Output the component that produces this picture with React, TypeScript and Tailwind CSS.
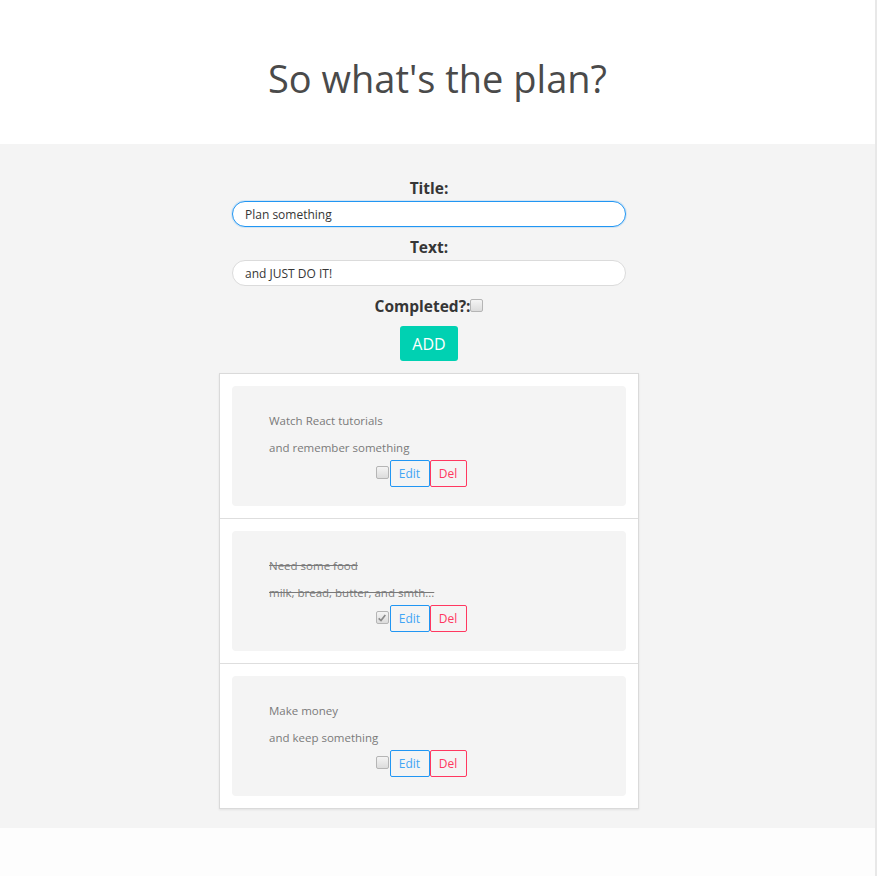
import { useState } from "react"

type Plan = { title: string; text: string; done: boolean }

const plans: Plan[] = [
  { title: "Watch React tutorials", text: "and remember something", done: false },
  { title: "Need some food", text: "milk, bread, butter, and smth...", done: true },
  { title: "Make money", text: "and keep something", done: false },
]

function Check({ checked }: { checked: boolean }) {
  return (
    <span className="inline-flex h-[13px] w-[13px] items-center justify-center rounded-[2px] border border-[#b5b5b5] bg-gradient-to-b from-[#f4f4f4] to-[#dcdcdc]">
      {checked && (
        <svg viewBox="0 0 12 12" className="h-[10px] w-[10px]">
          <path d="M2 6.5 L4.8 9 L10 2.5" fill="none" stroke="#8a8a8a" strokeWidth="2" />
        </svg>
      )}
    </span>
  )
}

function PlanItem({ plan }: { plan: Plan }) {
  const strike = plan.done ? "line-through" : ""
  return (
    <div className="border-b border-[#dedede] p-3 last:border-b-0">
      <div className="rounded-[4px] bg-[#f4f4f4] pt-[27px] pb-[19px] pl-[37px] pr-[37px]">
        <p className={`h-4 text-[11.5px] leading-4 text-[#7a7a7a] ${strike}`}>{plan.title}</p>
        <p className={`mt-[11px] h-4 text-[11.5px] leading-4 text-[#7a7a7a] ${strike}`}>{plan.text}</p>
        <div className="mt-1 flex justify-center">
          <div className="mr-4 flex items-center">
            <span className="mr-px -mt-[2px] flex">
              <Check checked={plan.done} />
            </span>
            <button className="h-[27px] w-10 rounded-[2px] border border-[#2196f3] text-[12px] text-[#42a5f5]">
              Edit
            </button>
            <button className="h-[27px] w-[37px] rounded-[2px] border border-[#ff3860] text-[12px] text-[#ff3860]">
              Del
            </button>
          </div>
        </div>
      </div>
    </div>
  )
}

export default function App() {
  const [title, setTitle] = useState("Plan something")
  const [text, setText] = useState("and JUST DO IT!")

  return (
    <div className="flex min-h-[876px] font-['Open_Sans',sans-serif]">
      <div className="flex flex-1 flex-col bg-[#fdfdfd]">
        <header className="flex h-[144px] items-center justify-center bg-white">
          <h1 className="mt-[12px] text-[38px] text-[#4a4a4a]">So what's the plan?</h1>
        </header>

        <section className="flex flex-col items-center bg-[#f4f4f4] pt-[34px] pr-[17px] pb-[19px]">
          <label className="h-5 text-[15.5px] font-bold leading-5 text-[#363636]">Title:</label>
          <input
            value={title}
            onChange={(e) => setTitle(e.target.value)}
            className="mt-[3px] h-[26px] w-[394px] rounded-full border border-[#2196f3] bg-white px-[12px] text-[12px] text-[#363636] shadow-[0_0_0_1px_rgba(33,150,243,0.15)] outline-none"
          />
          <label className="mt-[10px] h-5 text-[15.5px] font-bold leading-5 text-[#363636]">Text:</label>
          <input
            value={text}
            onChange={(e) => setText(e.target.value)}
            className="mt-[3px] h-[26px] w-[394px] rounded-full border border-[#dbdbdb] bg-white px-[12px] text-[12px] text-[#363636] outline-none"
          />
          <div className="mt-[10px] flex h-5 items-center text-[15.5px] font-bold leading-5 text-[#363636]">
            Completed?:
            <span className="-mt-[2px] flex">
              <Check checked={false} />
            </span>
          </div>
          <button className="mt-[10px] h-[35px] w-[58px] rounded-[3px] bg-[#00d1b2] text-[16px] text-white">ADD</button>

          <div className="mt-3 w-[420px] border border-[#dadada] bg-white shadow-[0_1px_2px_rgba(0,0,0,0.08)]">
            {plans.map((p, i) => (
              <PlanItem key={i} plan={p} />
            ))}
          </div>
        </section>
      </div>
      <div className="w-[2px] bg-[#e8e8e8]" />
      <div className="w-px bg-white" />
    </div>
  )
}
